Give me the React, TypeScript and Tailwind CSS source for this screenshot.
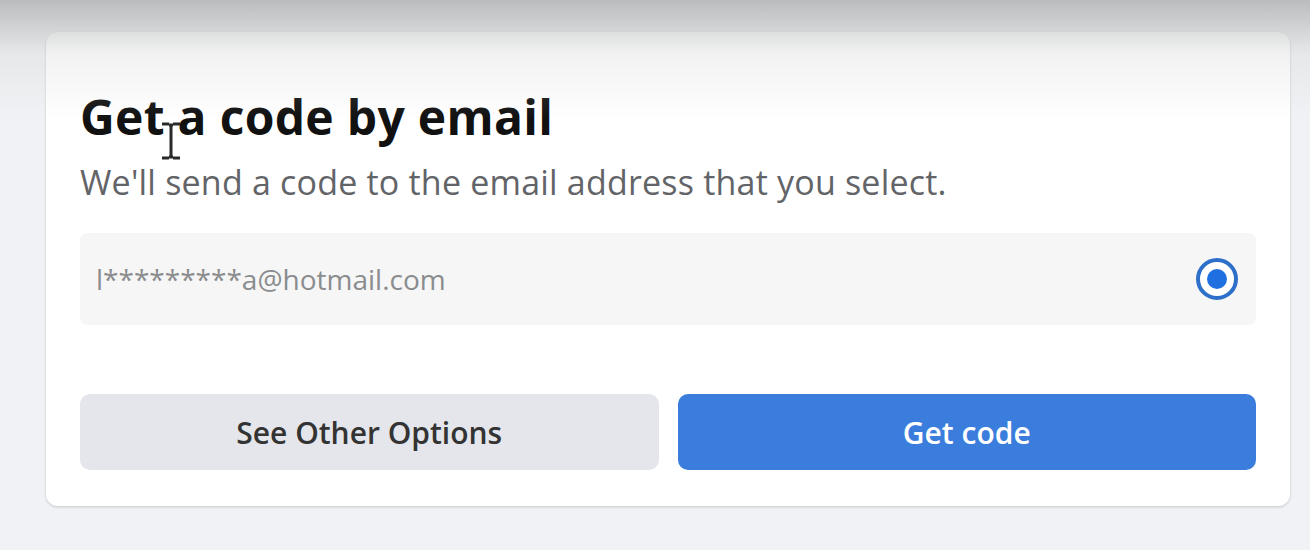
import React from "react";

export default function App() {
  return (
    <div className="relative min-h-[550px] w-full overflow-hidden bg-[#f0f2f5] pt-[32px] pl-[46px] pr-[20px]" style={{ fontFamily: '"Open Sans", "Noto Sans", sans-serif' }}>
      <div className="rounded-[12px] bg-white px-[34px] pt-[57px] pb-[36px] shadow-[0_1px_3px_rgba(0,0,0,0.18)]">
        <div className="relative">
          <h1 className="text-[48px] font-bold leading-[56px] tracking-[0.3px] text-[#111]">Get a code by email</h1>
          <svg className="absolute left-[80px] top-[33px]" width="22" height="38" viewBox="0 0 22 38">
            <path d="M2 2h7M13 2h7M11 3v32M2 36h7M13 36h7M9 35h4M9 3h4" stroke="#2a2a2a" strokeWidth="3" fill="none" />
          </svg>
        </div>
        <p className="mt-[17px] text-[34px] leading-[40px] tracking-[0.2px] text-[#626468]">We'll send a code to the email address that you select.</p>
        <div className="mt-[31px] flex h-[92px] items-center justify-between rounded-[8px] bg-[#f6f6f6] pl-[16px] pr-[18px]">
          <span className="text-[28px] text-[#8a8c8e]">l*********a@hotmail.com</span>
          <span className="flex h-[42px] w-[42px] items-center justify-center rounded-full border-[4px] border-[#2e6fc9] bg-white">
            <span className="h-[20px] w-[20px] rounded-full bg-[#1f6fe0]" />
          </span>
        </div>
        <div className="mt-[69px] grid grid-cols-2 gap-[19px]">
          <button className="h-[76px] rounded-[10px] bg-[#e4e6eb] text-[30px] font-semibold text-[#333]">See Other Options</button>
          <button className="h-[76px] rounded-[10px] bg-[#3b7ddd] text-[30px] font-semibold text-white">Get code</button>
        </div>
      </div>
      <div className="pointer-events-none absolute inset-x-0 top-0 h-[120px] bg-[linear-gradient(to_bottom,rgba(150,152,152,0.6),rgba(200,202,202,0.25)_45%,rgba(255,255,255,0))]" />
    </div>
  );
}
